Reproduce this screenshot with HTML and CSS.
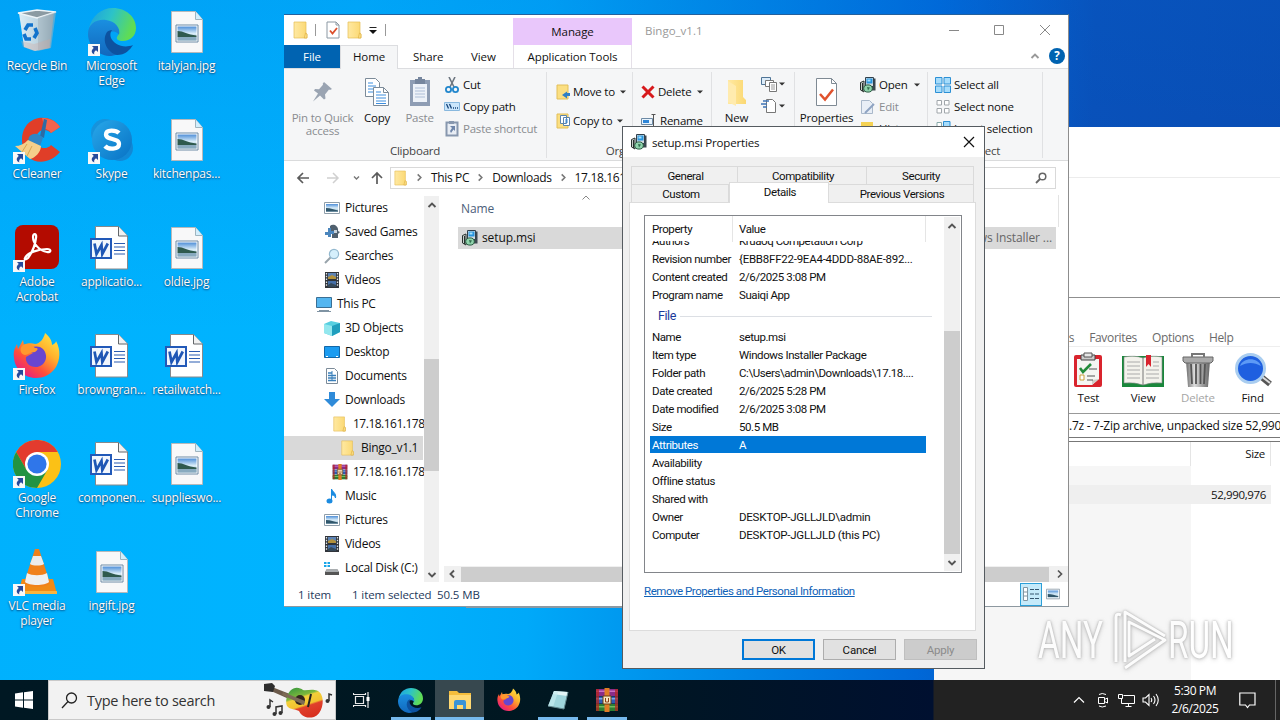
FILE: index.html
```html
<!DOCTYPE html>
<html lang="en">
<head>
<meta charset="utf-8">
<title>Desktop</title>
<link rel="stylesheet" href="styles.css">
</head>
<body>
<svg class="defs" width="0" height="0">
<defs>
<linearGradient id="gFold" x1="0" x2="1"><stop offset="0" stop-color="#ffe9a2"/><stop offset="1" stop-color="#fbd872"/></linearGradient>
<linearGradient id="gEdgeA" x1="0" x2="1" y1="0" y2=".3"><stop offset="0" stop-color="#1b9de2"/><stop offset=".5" stop-color="#2cc3c8"/><stop offset="1" stop-color="#5fdc55"/></linearGradient>
<linearGradient id="gEdgeB" x1="0" x2="0" y1="0" y2="1"><stop offset="0" stop-color="#1a8fe0"/><stop offset="1" stop-color="#1268bd"/></linearGradient>
<linearGradient id="gSky" x1="0" x2="0" y1="0" y2="1"><stop offset="0" stop-color="#4f8fd8"/><stop offset=".5" stop-color="#d8ecf8"/><stop offset="1" stop-color="#9dbdd0"/></linearGradient>
<linearGradient id="gSkype" x1="0" x2="1" y1="0" y2="1"><stop offset="0" stop-color="#28a8ea"/><stop offset="1" stop-color="#0872c4"/></linearGradient>
<linearGradient id="gFox" x1="1" x2=".2" y1="0" y2="1"><stop offset="0" stop-color="#fff24a"/><stop offset=".4" stop-color="#ffb02c"/><stop offset=".7" stop-color="#ff4f3a"/><stop offset="1" stop-color="#e3178c"/></linearGradient>
<linearGradient id="gBin" x1="0" x2="1"><stop offset="0" stop-color="#eef3f6"/><stop offset=".6" stop-color="#c9d5dc"/><stop offset="1" stop-color="#8d9ba5"/></linearGradient>
<linearGradient id="gGuitar" x1="0.2" x2=".6" y1="0" y2="1"><stop offset="0" stop-color="#3e9b3f"/><stop offset=".3" stop-color="#7db83c"/><stop offset=".36" stop-color="#f3cf3a"/><stop offset=".6" stop-color="#f3c22f"/><stop offset=".66" stop-color="#e0402c"/><stop offset="1" stop-color="#d8301f"/></linearGradient>
<linearGradient id="gCan" x1="0" x2="1"><stop offset="0" stop-color="#6d6d6d"/><stop offset=".35" stop-color="#dcdcdc"/><stop offset="1" stop-color="#666"/></linearGradient>

<symbol id="folder" viewBox="0 0 16 18"><path d="M1 1h12v12h1v4H1z" fill="url(#gFold)" stroke="#e5bd55" stroke-width=".7"/><path d="M12.500 12c1.500 0 1.800 1.500 1.300 5h-2.500z" fill="#fbe08a" stroke="#dfb041" stroke-width=".7"/></symbol>
<symbol id="shortcut" viewBox="0 0 12 12"><path d="M0 0h12v12H0z" fill="#f8f8f8"/><path d="M4 2h6v6L8 6.200C6 7.500 6 9 6.300 10.500 3 9 3 6 5.800 4z" fill="#274a9b"/></symbol>
<symbol id="image" viewBox="0 0 32 42"><path d="M.5.5h24l7 8v33H.5z" fill="#f8f8f9" stroke="#b7b9bb"/><path d="M24.500.5v8h7" fill="#d3eefc" stroke="#9fb4bf"/><path d="M5 14h22v17H5z" fill="#fff" stroke="#6d8aa5"/><path d="M6.500 15.500h19v14h-19z" fill="url(#gSky)"/><path d="M6.500 20c6 0 10 3.500 19 4.500V26h-19z" fill="#2f5a4e"/><path d="M6.500 26h19v3.500h-19z" fill="#88aabf"/></symbol>
<symbol id="word" viewBox="0 0 38 44"><path d="M5.500.5h23l9 9.500v33h-32z" fill="#fff" stroke="#86898c"/><path d="M28.500.5V10h9" fill="#f1f1f1" stroke="#63676a"/><path d="M24 17.500h11M24 21h11M24 24.500h11M24 28h11" stroke="#2b5cb2" stroke-width="1.200"/><path d="M0 12h22v21H0z" fill="#2259b8"/><path d="M2 14h18v17H2z" fill="#f2f6fd"/><path d="M4.500 17.500l2 10.500 5-9 .8 9 5.500-10.500" fill="none" stroke="#1f56b5" stroke-width="2.700"/></symbol>
<symbol id="edge" viewBox="0 0 48 48"><path d="M1 20C4 8 13 0 25 0c13 0 23 9 23 20 0 8-6 13-13 13-5 0-7-2-6-4 4-5 1-13-8-15C13 12 6 14 1 20z" fill="url(#gEdgeA)"/><path d="M0 26C0 16 8 11 18 12c9 1 15 8 13 15-2-4-8-5-11-1-5 7 4 18 17 15-4 5-10 7-16 7C9 47 0 37 0 26z" fill="url(#gEdgeB)"/><path d="M19 24c-6 9 1 21 10 23 8 0 13-5 16-10-10 4-19-1-22-7-1-3-1-5 1-8-2 0-4 1-5 2z" fill="#0d52a0"/></symbol>
<symbol id="firefox" viewBox="0 0 48 48"><path d="M32 1c5 4 7 8 7 12 3-1 4-3 4-4 5 9 4 19 0 26-5 8-13 11-20 11C11 46 2 37 1 26c-1-7 1-10 3-14l1 5 5-9 1 5c3-2 8-2 11-1 5 0 9-6 10-11z" fill="url(#gFox)"/><path d="M14 19c4-5 12-6 16-2 7 8 1 18-7 18-7 0-11-5-10-10l7-4z" fill="#6846cf"/><path d="M10 13c5-3 9 0 12 3 4 0 3 2 0 4-5 0-7 3-10 3-5-1-6-7-2-10z" fill="#ff982e"/></symbol>
<symbol id="rar" viewBox="0 0 24 24"><path d="M1 1h22v7H1z" fill="#8a2c88"/><path d="M1 2.500h22v1.500H1z" fill="#c86fc4"/><path d="M1 8.500h22v7H1z" fill="#2d5eb5"/><path d="M1 10h22v1.500H1z" fill="#7fa6e4"/><path d="M1 16h22v7H1z" fill="#2d7d32"/><path d="M1 18h22v1.500H1z" fill="#73ba62"/><path d="M1 1h3v22H1zM20 1h3v22h-3z" fill="#b3261e" opacity=".75"/><path d="M9.500 0h5v24h-5z" fill="#e07c25"/><path d="M8 8h8v8H8z" fill="#f4e6c0" stroke="#6b3c12"/><path d="M10.500 10v4M13.500 10v4M10.500 14h3" stroke="#8c3c14" fill="none"/></symbol>
<symbol id="msi" viewBox="0 0 16 16"><path d="M11 1.500h4.500v12H12z" fill="#3c474f"/><path d="M5.500.5h8v9h-8z" fill="#d5dde2" stroke="#31414d"/><path d="M6.500 1.500h6v5h-6z" fill="#2795de"/><path d="M7.500 2.500h3v2h-3z" fill="#a7e0fb"/><path d="M.5 5.500L4 4v11L.5 13z" fill="#c9cfcc" stroke="#28312e"/><path d="M2.500 6v8" stroke="#28312e"/><ellipse cx="8" cy="11.500" rx="4.300" ry="3.600" fill="#8fd3ab" stroke="#275a40"/><path d="M7 10l3 .5-2 3z" fill="#2f6b4c"/></symbol>
<symbol id="pic" viewBox="0 0 16 16"><path d="M.5 2.500h15v11H.5z" fill="#fff" stroke="#8f9eaa"/><path d="M2 4h12v8H2z" fill="url(#gSky)"/><path d="M2 8c5 0 8 1.500 12 2.500v1H2z" fill="#30566b"/></symbol>
<symbol id="film" viewBox="0 0 16 16"><path d="M1 0h14v16H1z" fill="#30343a"/><path d="M2.500 1v14M13.500 1v14" stroke="#dfe5ea" stroke-width="1.300" stroke-dasharray="1.500 1.300"/><path d="M4 1h8v6H4z" fill="#5d83b5"/><path d="M4 5l4-2 4 2v2H4z" fill="#b3923c"/><path d="M4 9h8v6H4z" fill="#4670a8"/><path d="M4 13l3-2 5 2v2H4z" fill="#35495a"/></symbol>
<symbol id="page" viewBox="0 0 16 18"><path d="M2 1h9l3 3v13H2z" fill="#fff" stroke="#8b98a3"/><path d="M11 1v3h3" fill="none" stroke="#8b98a3"/><path d="M5 9.500l2.500 3L12 7" fill="none" stroke="#dc4f2c" stroke-width="1.800"/></symbol>
<symbol id="chevup" viewBox="0 0 10 10"><path d="M1.500 7L5 3.500 8.500 7" fill="none" stroke="currentColor" stroke-width="1.900"/></symbol>
<symbol id="chevdn" viewBox="0 0 10 10"><path d="M1.500 3L5 6.500 8.500 3" fill="none" stroke="currentColor" stroke-width="1.900"/></symbol>
<symbol id="chevrt" viewBox="0 0 10 10"><path d="M3 1.500L6.500 5 3 8.500" fill="none" stroke="currentColor" stroke-width="1.700"/></symbol>
<symbol id="tri" viewBox="0 0 6 4"><path d="M0 .5h6L3 3.500z" fill="#333"/></symbol>
</defs>
</svg>

<div class="desktop">
<div class="icons">
  <div class="dicon"><div class="art"><svg width="48" height="48" viewBox="0 0 48 48"><path d="M6 5l35-1-4 36-15 3-11-4z" fill="url(#gBin)" opacity=".92"/><path d="M5 5l19-3 19 2-19 6z" fill="#8b9aa2" stroke="#edf4f8" stroke-width="1.400"/><path d="M25 10l18-6-5 36-13 3z" fill="#a3b2bc" opacity=".55"/><path d="M8 33l13 3 16-5-1 9-15 3-11-4z" fill="#cfa9a0" opacity=".35"/><g fill="none" stroke="#1273cc" stroke-width="3.600"><path d="M12 22l3-5 5 0"/><path d="M22 20l2 5-3 5"/><path d="M18 31h-5l-2-5"/></g></svg></div><span>Recycle Bin</span></div>
  <div class="dicon"><div class="art"><svg width="48" height="48" viewBox="0 0 48 48"><path d="M47 11C37-4 10-1 9 23s24 30 38 13l-9-7c-5 6-15 3-15-6s10-12 15-6z" fill="#e03e28"/><path d="M47 11c-5-7-11-9-18-9l3 11c2 0 4 1 6 4z" fill="#f2644d"/><path d="M27 20L31 3l3 1-3 18z" fill="#2c6ca4"/><path d="M16 21c4-5 10-4 14 1l-3 8-12-5z" fill="#2f86c4"/><path d="M15 24l13 6c0 6-6 12-11 13L2 30c5 0 9-2 13-6z" fill="#f4cf8a"/><path d="M14 28l-5 8M19 30l-5 10" stroke="#d9a550"/></svg><svg class="arrow"><use href="#shortcut"/></svg></div><span>CCleaner</span></div>
  <div class="dicon"><div class="art"><svg width="48" height="48" viewBox="0 0 48 48"><rect x="2" y="1" width="44" height="44" rx="8" fill="#b30b00"/><path d="M12 34c2-5 13-9 22-9 5 0 4 4 0 3-8-1-14-9-14-15 0-4 4-4 3 1-1 8-5 16-8 20-2 2-4 2-3 0z" fill="none" stroke="#fff" stroke-width="2.200"/></svg><svg class="arrow"><use href="#shortcut"/></svg></div><span>Adobe<br>Acrobat</span></div>
  <div class="dicon"><div class="art"><svg width="48" height="48"><use href="#firefox"/></svg><svg class="arrow"><use href="#shortcut"/></svg></div><span>Firefox</span></div>
  <div class="dicon"><div class="art"><svg width="48" height="48" viewBox="0 0 48 48"><circle cx="24" cy="24" r="24" fill="#fbc116"/><path d="M3.200 12A24 24 0 0 1 44.800 12H24L13.600 30z" fill="#e33b2e"/><path d="M3.200 12A24 24 0 0 0 24 48l10.400-18H13.600z" fill="#229342"/><circle cx="24" cy="24" r="12" fill="#fff"/><circle cx="24" cy="24" r="9.600" fill="#2f76ea"/></svg><svg class="arrow"><use href="#shortcut"/></svg></div><span>Google<br>Chrome</span></div>
  <div class="dicon"><div class="art"><svg width="48" height="48" viewBox="0 0 48 48"><path d="M9 31h31l4 15H5z" fill="#f08a17"/><path d="M5 43h39v3H5z" fill="#f9b43e"/><path d="M22 1h4l11 34c-3 5-23 5-26 0z" fill="#f0811b"/><path d="M20 8h8l3 8c-3 2-11 2-14 0z" fill="#ececec"/><path d="M14 25c5 3 15 3 20 0l2 9c-4 4-20 4-24 0z" fill="#f0f0f0"/></svg><svg class="arrow"><use href="#shortcut"/></svg></div><span>VLC media<br>player</span></div>
  <div class="dicon"><div class="art"><svg width="48" height="48"><use href="#edge"/></svg><svg class="arrow"><use href="#shortcut"/></svg></div><span>Microsoft<br>Edge</span></div>
  <div class="dicon"><div class="art"><svg width="48" height="48" viewBox="0 0 48 48"><circle cx="17" cy="17" r="14" fill="#1693dc"/><circle cx="32" cy="32" r="13" fill="#1288d5"/><circle cx="24" cy="24" r="20" fill="url(#gSkype)"/><path d="M31 17c-3-3-13-4-13 1.500 0 6 13 3 13 9.500 0 6-11 5.500-14 2" fill="none" stroke="#fff" stroke-width="4.300"/></svg><svg class="arrow"><use href="#shortcut"/></svg></div><span>Skype</span></div>
  <div class="dicon"><div class="art"><svg class="wordi"><use href="#word"/></svg></div><span>applicatio...</span></div>
  <div class="dicon"><div class="art"><svg class="wordi"><use href="#word"/></svg></div><span>browngran...</span></div>
  <div class="dicon"><div class="art"><svg class="wordi"><use href="#word"/></svg></div><span>componen...</span></div>
  <div class="dicon"><div class="art"><svg class="imgi"><use href="#image"/></svg></div><span>ingift.jpg</span></div>
  <div class="dicon"><div class="art"><svg class="imgi"><use href="#image"/></svg></div><span>italyjan.jpg</span></div>
  <div class="dicon"><div class="art"><svg class="imgi"><use href="#image"/></svg></div><span>kitchenpas...</span></div>
  <div class="dicon"><div class="art"><svg class="imgi"><use href="#image"/></svg></div><span>oldie.jpg</span></div>
  <div class="dicon"><div class="art"><svg class="wordi"><use href="#word"/></svg></div><span>retailwatch...</span></div>
  <div class="dicon"><div class="art"><svg class="imgi"><use href="#image"/></svg></div><span>supplieswo...</span></div>
</div>

<div class="backwin"><div class="backhead"></div></div>

<div class="winrar">
  <div class="rar-menu"><span>Tools</span><span>Favorites</span><span>Options</span><span>Help</span></div>
  <div class="rar-tools">
    <div class="rt rt1"><svg width="32" height="36" viewBox="0 0 32 36"><rect x="2" y="3" width="28" height="32" rx="2" fill="#d9242d"/><path d="M5 7h22v20l-7 6H5z" fill="#f5f5f2"/><path d="M27 27l-7 6v-5z" fill="#cfcfc8"/><path d="M9 3h14v5H9z" fill="#ccc" stroke="#444"/><path d="M12 1h8v4h-8z" fill="#e6e6e6" stroke="#555"/><path d="M8 16l3 4 8-8" fill="none" stroke="#238b3a" stroke-width="2.600"/><path d="M17 17h8M15 24h8M15 28h6" stroke="#555"/><path d="M8 23h4v5H8z" fill="#fff" stroke="#c99f3a"/></svg>Test</div>
    <div class="rt rt2"><svg width="44" height="36" viewBox="0 0 44 36"><path d="M1 4h42v31H1z" fill="#19873b"/><path d="M3 5q11-2 19 1 8-3 19-1v26q-11-1-19 2-8-3-19-2z" fill="#f3f2ec" stroke="#888" stroke-width=".6"/><path d="M22 6v27" stroke="#777"/><path d="M6 10h13M6 14h13M6 18h13M6 22h13M6 26h13M25 18h13M25 22h13M25 26h13M32 10h6M32 14h6" stroke="#aaa"/><path d="M25 3h5v12l-2.500-3-2.500 3z" fill="#d8242f"/></svg>View</div>
    <div class="rt rt3 off"><svg width="32" height="36" viewBox="0 0 32 36"><path d="M4 9h24l-2 26H6z" fill="url(#gCan)"/><path d="M9 12l1 20M14 12v20M18.500 12v20M23 12l-1 20" stroke="#555" stroke-width="1.800"/><path d="M1 5h30v4l-2 2H3L1 9z" fill="#aaa" stroke="#666"/><path d="M10 5V2h12v3" fill="none" stroke="#777" stroke-width="2"/></svg>Delete</div>
    <div class="rt rt4"><svg width="38" height="36" viewBox="0 0 38 36"><path d="M25 23l11 9" stroke="#555" stroke-width="6"/><path d="M27 24l9 7" stroke="#ddd" stroke-width="2"/><circle cx="16.500" cy="16.500" r="14" fill="#1e5fe0" stroke="#a9cdf0" stroke-width="3"/><path d="M6 14c3-9 18-9 21 0-7-4-14-4-21 0z" fill="#77b3ff" opacity=".7"/></svg>Find</div>
  </div>
  <div class="rar-path">.7z - 7-Zip archive, unpacked size 52,990,976 bytes</div>
  <div class="rar-head"><span class="c1"></span><span class="c2">Size</span></div>
  <div class="rar-list"><div class="rar-row">52,990,976</div></div>
</div>

<section class="explorer">
  <div class="ex-top">
    <div class="ex-title">
      <svg class="fo q1"><use href="#folder"/></svg><i class="tick t1"></i><svg class="fo q2"><use href="#page"/></svg><svg class="fo q3"><use href="#folder"/></svg>
      <svg class="q4" width="8" height="7" viewBox="0 0 8 7"><path d="M.5.5h7" stroke="#222"/><path d="M0 3h8L4 7z" fill="#111"/></svg><i class="tick t2"></i>
      <div class="manage">Manage</div><div class="wtitle">Bingo_v1.1</div>
      <svg class="wctl" width="104" height="12" viewBox="0 0 104 12"><path d="M1 6.500h10M46.500 1.500h9v9h-9zM92 1l10 10M102 1L92 11" fill="none" stroke="#888"/></svg>
    </div>
    <div class="ex-tabs"><div class="tfile">File</div><div class="thome">Home</div><div class="tshare">Share</div><div class="tview">View</div><div class="tapp">Application Tools</div>
      <svg class="rcol" width="10" height="10"><use href="#chevup"/></svg><div class="help">?</div></div>
  </div>
  <div class="ribbon">
    <div class="grp g1">
      <div class="big bpin dis"><svg width="24" height="32" viewBox="0 0 24 32"><path d="M13 5l8 7-2 1-1-.5-4 5 .5 4-1.500 1-4-4-7 6 5-8-4-3 1-1.500 4 .2 4-4.500-.3-1z" fill="#9aa4b2"/></svg><span>Pin to Quick<br>access</span></div>
      <div class="big bcopy"><svg width="26" height="32" viewBox="0 0 26 32"><path d="M1.500 1.500h10l4 4v14h-14z" fill="#fff" stroke="#7c8b99"/><path d="M4 6h5M4 9h8M4 12h8M4 15h8" stroke="#3d8ede"/><path d="M9.500 10.500h10l5 5v13h-15z" fill="#fff" stroke="#7c8b99"/><path d="M19.500 10.500v5h5" fill="none" stroke="#7c8b99"/><path d="M12 15h5M12 18h10M12 21h10M12 24h10M12 26.500h10" stroke="#3d8ede"/></svg><span>Copy</span></div>
      <div class="big bpaste dis"><svg width="22" height="32" viewBox="0 0 22 32"><path d="M1 3h20v26H1z" fill="#8e9db4"/><path d="M4 7h14v18H4z" fill="#edf2f9"/><path d="M6 2h10v5H6z" fill="#76869e"/><path d="M9 0h4v3H9z" fill="#76869e"/><path d="M6 11h10M6 14h10M6 17h10M6 20h10" stroke="#aebfd8"/></svg><span>Paste</span></div>
      <div class="small"><div><svg width="16" height="16" viewBox="0 0 16 16"><path d="M5 0l5 10M11 0L6 10" stroke="#6d7680" stroke-width="1.600"/><circle cx="4.500" cy="12.500" r="2.600" fill="none" stroke="#2287cd" stroke-width="1.800"/><circle cx="11.500" cy="12.500" r="2.600" fill="none" stroke="#2287cd" stroke-width="1.800"/></svg>Cut</div><div><svg width="16" height="16" viewBox="0 0 16 16"><path d="M.5 3.500h15v8H.5z" fill="#cbe6fb" stroke="#88b8de"/><path d="M2.500 5l2 4.500M5.500 5l2 4.500M9 9h1M11 9h1M13 9h1" stroke="#16457b" stroke-width="1.300"/></svg>Copy path</div><div class="dis"><svg width="16" height="16" viewBox="0 0 16 16"><path d="M2.500 1.500h11v13h-11z" fill="#e8edf4" stroke="#8797ae" stroke-width="2"/><path d="M5 0h5v3H5z" fill="#8797ae"/><path d="M6 5h5v5L9.500 8.500 7 12l-1-2 2-3z" fill="#6e85a9"/></svg>Paste shortcut</div></div>
      <div class="cap">Clipboard</div>
    </div>
    <div class="grp g2"><div class="small2"><div><svg width="15" height="16" viewBox="0 0 15 16"><path d="M1 1h11v14H1z" fill="#fbdf82" stroke="#e2bf59"/><path d="M14 9v3h-3v2.500L6 11l5-3.500V9z" fill="#2e7fc7"/></svg>Move to <svg class="tri"><use href="#tri"/></svg></div><div><svg width="15" height="16" viewBox="0 0 15 16"><path d="M1 1h11v14H1z" fill="#fbdf82" stroke="#e2bf59"/><path d="M4.500 2.500h6v8h-6zM7.500 4.500h6v8h-6z" fill="#fff" stroke="#5b84ad"/><path d="M9 7h3M9 9h3" stroke="#3d8ede"/></svg>Copy to <svg class="tri"><use href="#tri"/></svg></div></div></div>
    <div class="grp g3"><div class="small2"><div><svg width="14" height="14" viewBox="0 0 14 14"><path d="M1.500 1.500l11 11M12.500 1.500l-11 11" stroke="#d7191c" stroke-width="3"/></svg>Delete <svg class="tri"><use href="#tri"/></svg></div><div><svg width="16" height="14" viewBox="0 0 16 14"><path d="M.5 4.500h11v6H.5z" fill="#e9f4fd" stroke="#6d8aa5"/><path d="M2 6h6v3H2z" fill="#2f86d8"/><path d="M10.500.5h4M12.500.5v13M10.500 13.500h4" stroke="#555" fill="none"/></svg>Rename</div></div><div class="cap org">Organize</div></div>
    <div class="grp g4"><div class="big bnew"><svg width="20" height="32" viewBox="0 0 20 32"><path d="M1 3h15v17l3 3v4H1z" fill="url(#gFold)"/><path d="M1 4l8 5v20l-8-4z" fill="#ffebae"/></svg><span>New</span></div><div class="ngrp"><div><svg width="17" height="16" viewBox="0 0 17 16"><path d="M.5 1.500h9v7h-9z" fill="#dcecf9" stroke="#4f7496"/><path d="M4.500 4.500h8v6h-8z" fill="#fff" stroke="#777"/><path d="M8.500 6.500h7v9h-7z" fill="#fff" stroke="#777"/><path d="M10 9h4M10 11h4M10 13h4" stroke="#999"/></svg><svg class="tri"><use href="#tri"/></svg></div><div><svg width="17" height="16" viewBox="0 0 17 16"><path d="M5.500 1.500h6l3 3v10h-9z" fill="#fff" stroke="#777"/><path d="M2 3h6M0 6h6M2 9h4" stroke="#3f74b5" stroke-width="1.400"/></svg><svg class="tri"><use href="#tri"/></svg></div></div></div>
    <div class="grp g5"><div class="big bprop"><svg width="23" height="32" viewBox="0 0 23 32"><path d="M1.500 1.500h15l5 5v22h-20z" fill="#fff" stroke="#7f8a94"/><path d="M16.500 1.500v5h5" fill="none" stroke="#7f8a94"/><path d="M5 17l5 5.500 8-10" fill="none" stroke="#e0522d" stroke-width="2.500"/></svg><span>Properties</span></div><div class="small s5"><div><svg width="16" height="16"><use href="#msi"/></svg>Open <svg class="tri"><use href="#tri"/></svg></div><div class="dis"><svg width="16" height="16" viewBox="0 0 16 16"><path d="M1.500 1.500h8l3 3v10h-11z" fill="#e8eef6" stroke="#a9b8ca"/><path d="M14 5l-9 9" stroke="#8ea3c2" stroke-width="2"/></svg>Edit</div><div><svg width="16" height="16" viewBox="0 0 16 16"><path d="M1 1h12v13H1z" fill="#f5d253"/><circle cx="10" cy="10" r="5" fill="#3a9a55"/></svg>History</div></div></div>
    <div class="grp g6"><div class="small s6"><div><svg width="16" height="16" viewBox="0 0 16 16"><path d="M.5.5h6.500v6.500H.5zM9 .5h6.500v6.500H9zM.5 9h6.500v6.500H.5zM9 9h6.500v6.500H9z" fill="#a6dcfb" stroke="#2c90d5"/></svg>Select all</div><div><svg width="16" height="16" viewBox="0 0 16 16"><path d="M2 1.500h4.500v4.500H2zM9.500 1.500H14v4.500H9.500zM2 9.500h4.500V14H2zM9.500 9.500H14V14H9.500z" fill="#fff" stroke="#a0a6aa"/></svg>Select none</div><div><svg width="16" height="16" viewBox="0 0 16 16"><path d="M2 1.500h4.500v4.500H2z" fill="#fff" stroke="#8aa"/><path d="M8.500.5h6.500v6.500H8.500z" fill="#a6dcfb" stroke="#2c90d5"/></svg>Invert selection</div></div><div class="cap">Select</div></div>
  </div>
  <div class="addr">
    <svg class="nav" width="84" height="16" viewBox="0 0 84 16"><path d="M12 8H1M6 3L1 8l5 5" fill="none" stroke="#5b5b5b" stroke-width="1.700"/><path d="M30 8h11M36 3l5 5-5 5" fill="none" stroke="#d0d0d0" stroke-width="1.500"/><path d="M57 6.500l2.500 2.500L62 6.500" fill="none" stroke="#777" stroke-width="1.400"/><path d="M80 14V3M75 8l5-5 5 5" fill="none" stroke="#5b5b5b" stroke-width="1.700"/></svg>
    <div class="crumbs"><svg width="14" height="18"><use href="#folder"/></svg><svg class="cr"><use href="#chevrt"/></svg><span>This PC</span><svg class="cr"><use href="#chevrt"/></svg><span>Downloads</span><svg class="cr"><use href="#chevrt"/></svg><span>17.18.161.178</span></div>
    <div class="sbox"><svg width="12" height="12" viewBox="0 0 12 12"><circle cx="7.500" cy="4.500" r="3.300" fill="none" stroke="#666" stroke-width="1.500"/><path d="M5 7l-4 4" stroke="#666" stroke-width="1.800"/></svg></div>
  </div>
  <div class="ex-main">
    <div class="tree">
      <div class="n"><svg><use href="#pic"/></svg>Pictures</div>
      <div class="n"><svg viewBox="0 0 16 16"><path d="M6 2c3-3 9 0 8 5l2 1-2 2v4H8V9H6z" fill="#50606e"/><path d="M1 8h3V4h3v3h3v3H7v3H4v-2H1z" fill="#4b86bd"/><path d="M10 6h3v3h-3z" fill="#c8d3dc"/></svg>Saved Games</div>
      <div class="n"><svg viewBox="0 0 16 16"><path d="M7 9l-6 6" stroke="#98a3ab" stroke-width="2"/><circle cx="10" cy="6" r="4.600" fill="#d5effc" stroke="#92b8cf" stroke-width="1.200"/></svg>Searches</div>
      <div class="n"><svg><use href="#film"/></svg>Videos</div>
      <div class="n pc"><svg viewBox="0 0 16 16"><path d="M.5 1.500h15v10H.5z" fill="#54b6f0" stroke="#3a6f94"/><path d="M3 14.500h10M1 15.500h14" stroke="#7f93a3"/></svg>This PC</div>
      <div class="n"><svg viewBox="0 0 16 16"><path d="M0 4l7-3 9 2v9l-8 4-8-3z" fill="#56cfe0"/><path d="M0 4l8 2v10l-8-3z" fill="#93e7ee"/><path d="M8 6l8-3v9l-8 4z" fill="#1e9ebd"/></svg>3D Objects</div>
      <div class="n"><svg viewBox="0 0 16 16"><path d="M.5 2.500h15v11H.5z" fill="#1b9cf1" stroke="#1267a8"/><path d="M2 12.500h2M12 12.500h2" stroke="#fff"/></svg>Desktop</div>
      <div class="n"><svg viewBox="0 0 16 16"><path d="M2.500.5h8l3 3v12h-11z" fill="#fff" stroke="#7c8b99"/><path d="M4 5h4M4 7.500h8M4 10h8M4 12.500h8" stroke="#3b80bb" stroke-width="1.300"/><path d="M8 3v10" stroke="#3b80bb"/></svg>Documents</div>
      <div class="n"><svg viewBox="0 0 16 16"><path d="M5 0h6v7h5l-8 8-8-8h5z" fill="#2f8bd9"/></svg>Downloads</div>
      <div class="n l2"><svg><use href="#folder"/></svg>17.18.161.178</div>
      <div class="n l3 sel"><svg><use href="#folder"/></svg>Bingo_v1.1</div>
      <div class="n l2"><svg><use href="#rar"/></svg>17.18.161.178</div>
      <div class="n"><svg viewBox="0 0 16 16"><path d="M7.500 13V1c1 3 5 4 4 9-.5-2-1.500-3-3.500-3" fill="#1b8be0" stroke="#1b8be0"/><ellipse cx="5.500" cy="13" rx="3" ry="2.500" fill="#1b8be0"/></svg>Music</div>
      <div class="n"><svg><use href="#pic"/></svg>Pictures</div>
      <div class="n"><svg><use href="#film"/></svg>Videos</div>
      <div class="n"><svg viewBox="0 0 16 16"><path d="M0 2h2.500v2H0zM3.500 2H6v2H3.500zM0 5h2.500v2H0zM3.500 5H6v2H3.500z" fill="#18a5e8"/><path d="M3 9h10l2 3v3H1v-3z" fill="#555"/><path d="M3 9h10l2 3H1z" fill="#a9adb0"/></svg>Local Disk (C:)</div>
    </div>
    <div class="vs"><svg width="10" height="10"><use href="#chevup"/></svg><div class="thumb"></div><svg width="10" height="10"><use href="#chevdn"/></svg></div>
    <div class="files">
      <div class="fhead"><span>Name</span><svg width="10" height="10" viewBox="0 0 10 10"><path d="M1.500 6.500L5 3l3.500 3.500" fill="none" stroke="#888"/></svg></div>
      <div class="frow"><svg width="16" height="16"><use href="#msi"/></svg><span>setup.msi</span><span class="ftype">Windows Installer ...</span></div>
      <div class="fspace"></div>
      <div class="hs"><svg width="10" height="10" viewBox="0 0 10 10"><path d="M7 1.500L3.500 5 7 8.500" fill="none" stroke="#555" stroke-width="1.900"/></svg><div class="hthumb"></div><svg width="10" height="10"><use href="#chevrt"/></svg></div>
    </div>
  </div>
  <div class="status"><span class="s1">1 item</span><span class="s2">1 item selected</span><span class="s3">50.5 MB</span>
    <div class="vdet"><svg width="18" height="14" viewBox="0 0 18 14"><path d="M1.500.5h4v13h-4zM1.500 5h4M1.500 9h4" fill="#fff" stroke="#8196a3"/><path d="M8 2.500h4M13 2.500h4M8 7h4M13 7h4M8 11.500h4M13 11.500h4" stroke="#35566e"/></svg></div><svg class="vpic" width="14" height="14"><use href="#pic"/></svg></div>
</section>

<section class="dialog">
  <div class="dtitle"><svg width="16" height="16"><use href="#msi"/></svg><span>setup.msi Properties</span><svg class="dx" width="12" height="12" viewBox="0 0 12 12"><path d="M1 1l10 10M11 1L1 11" stroke="#111" stroke-width="1.200"/></svg></div>
  <div class="dtabs1"><div>General</div><div>Compatibility</div><div>Security</div></div>
  <div class="dtabs2"><div>Custom</div><div class="on">Details</div><div>Previous Versions</div></div>
  <div class="panel">
    <div class="lbox">
      <div class="lcol">
        <div class="lhead"><span>Property</span><span>Value</span></div>
        <div class="lrows">
          <div class="r first"><span>Authors</span><span>Kruaoq Competation Corp</span></div>
          <div class="r"><span>Revision number</span><span class="w">{EBB8FF22-9EA4-4DDD-88AE-892...</span></div>
          <div class="r"><span>Content created</span><span>2/6/2025 3:08 PM</span></div>
          <div class="r"><span>Program name</span><span>Suaiqi App</span></div>
          <div class="fgroup">File<i></i></div>
          <div class="r"><span>Name</span><span>setup.msi</span></div>
          <div class="r"><span>Item type</span><span>Windows Installer Package</span></div>
          <div class="r"><span>Folder path</span><span>C:\Users\admin\Downloads\17.18....</span></div>
          <div class="r"><span>Date created</span><span>2/6/2025 5:28 PM</span></div>
          <div class="r"><span>Date modified</span><span>2/6/2025 3:08 PM</span></div>
          <div class="r"><span>Size</span><span>50.5 MB</span></div>
          <div class="r hot"><span>Attributes</span><span>A</span></div>
          <div class="r"><span>Availability</span><span></span></div>
          <div class="r"><span>Offline status</span><span></span></div>
          <div class="r"><span>Shared with</span><span></span></div>
          <div class="r"><span>Owner</span><span class="w">DESKTOP-JGLLJLD\admin</span></div>
          <div class="r"><span>Computer</span><span class="w">DESKTOP-JGLLJLD (this PC)</span></div>
        </div>
      </div>
      <div class="lvs"><svg width="10" height="10"><use href="#chevup"/></svg><div></div><svg width="10" height="10"><use href="#chevdn"/></svg></div>
    </div>
    <a class="link">Remove Properties and Personal Information</a>
  </div>
  <div class="btns"><div class="ok">OK</div><div>Cancel</div><div class="na">Apply</div></div>
</section>

<div class="mark"><span class="w1">ANY</span><svg width="60" height="64" viewBox="0 0 60 64"><path d="M8 54V9q0-4 5-2" fill="none" stroke="#fff" stroke-width="3"/><path d="M17 54V4l40 24" fill="none" stroke="#fff" stroke-width="3" stroke-linejoin="round"/><path d="M17 60l40-28L21 14v34l26-17" fill="none" stroke="#fff" stroke-width="3" stroke-linejoin="round"/></svg><span class="w2">RUN</span></div>

<div class="taskbar">
  <div class="start"><svg width="18" height="18" viewBox="0 0 18 18"><path d="M0 2.500L8 1.300V8.500H0zM9 1.200L18 0v8.500H9zM0 9.500h8v7.200L0 15.500zM9 9.500h9V18l-9-1.200z" fill="#fff"/></svg></div>
  <div class="search"><svg class="mag" width="17" height="17" viewBox="0 0 17 17"><circle cx="10.500" cy="6" r="5" fill="none" stroke="#222" stroke-width="1.300"/><path d="M7 9.500l-6 6.500" stroke="#222" stroke-width="1.300"/></svg><span>Type here to search</span>
    <svg class="guitar" width="72" height="38" viewBox="0 0 72 38"><path d="M2 4l7 2 28 11-2 5L8 10 1 9z" fill="#6b5a4b"/><path d="M1 3l8-1 3 3-2 6-9-1z" fill="#2d2d2d"/><path d="M27 10c5-5 10-3 13-1 5 1 13-3 18 4 4 7 1 20-7 23-9 2-13-2-15-6-3-2-9-1-12-5-2-5 0-11 3-15z" fill="url(#gGuitar)"/><circle cx="37" cy="19" r="5" fill="#33251d"/><path d="M20 11l22 9-1 4-22-10z" fill="#7c6a55"/><path d="M48 13l-3 13" stroke="#222" stroke-width="2"/><g fill="none" stroke="#333" stroke-width="1.500"><path d="M7 26v-7l3 2M13 33v-7l6-1v7M66 20v-7l3 1"/></g><circle cx="5.500" cy="26" r="2" fill="#333"/><circle cx="11.500" cy="33" r="2" fill="#333"/><circle cx="17.500" cy="32" r="2" fill="#333"/><circle cx="64.500" cy="20" r="2" fill="#333"/></svg></div>
  <div class="tb"><svg width="17" height="16" viewBox="0 0 17 16"><path d="M2.500 4.500h8v7h-8zM.5 1v1.500h12V1M.5 15v-1.500h12V15M15 0v16" fill="none" stroke="#e8e8e8" stroke-width="1.200"/><path d="M13.500 5h3v4h-3z" fill="#fff"/></svg></div>
  <div class="tb run"><svg width="25" height="25"><use href="#edge"/></svg></div>
  <div class="tb act"><svg width="24" height="20" viewBox="0 0 24 20"><path d="M1 1h8l2 2h12v16H1z" fill="#f5bd3c"/><path d="M1 5h22v14H1z" fill="#ffd872"/><path d="M6 19v-7q0-2 2-2h8q2 0 2 2v7h-3v-4H9v4z" fill="#3a93d8"/></svg></div>
  <div class="tb"><svg width="24" height="24"><use href="#firefox"/></svg></div>
  <div class="tb run"><svg width="24" height="24" viewBox="0 0 24 24"><path d="M8 3l14 1-4 17-16-3z" fill="#9fd5dc"/><path d="M8 3l14 1-1 4L7 6z" fill="#e2f4f6"/><path d="M8 3L2 18l5 1 5-15z" fill="#c6ebef" opacity=".7"/><path d="M2 18l16 3 4-17" fill="none" stroke="#61868d"/></svg></div>
  <div class="tb run"><svg width="26" height="24"><use href="#rar"/></svg></div>
  <div class="tray">
    <svg class="y1" width="12" height="10" viewBox="0 0 12 10"><path d="M1 7.500l5-5 5 5" fill="none" stroke="#fff" stroke-width="1.200"/></svg>
    <svg class="y2" width="14" height="16" viewBox="0 0 14 16"><path d="M2.500 5.500h6v6h-6zM8.500 7.500l3-1.500v5l-3-1.500M3 2.500q3-2 7 0M3 14q3 2 7 0" fill="none" stroke="#fff"/></svg>
    <svg class="y3" width="17" height="15" viewBox="0 0 17 15"><path d="M5.500 2.500h11v8H3.500V6M7.500 13.500h6M10.500 10.500v3" fill="none" stroke="#fff"/><path d="M.5 1.500h4v4h-4z" fill="#222" stroke="#fff"/></svg>
    <svg class="y4" width="18" height="14" viewBox="0 0 18 14"><path d="M1 5h2.500L7 1.500v11L3.500 9H1zM9 5q1.500 2 0 4M11.500 3q3 4 0 8M14 1q4.500 6 0 12" fill="none" stroke="#fff" stroke-width="1.100"/></svg>
    <div class="clock">5:30 PM<br>2/6/2025</div>
    <svg class="y5" width="17" height="17" viewBox="0 0 17 17"><path d="M.8 1h15.200v12H10.500L8.500 15.500l-2-2.500H.8z" fill="none" stroke="#fff" stroke-width="1.200"/></svg>
    <i></i>
  </div>
</div>
</div>
</body>
</html>
```
FILE: styles.css
```css
*{box-sizing:border-box}
body{margin:0;overflow:hidden;font:11.5px/15px "Open Sans","Noto Sans",sans-serif;color:#111;white-space:nowrap}
svg{display:block;flex:none}
.defs{position:absolute}
.desktop{position:relative;width:1280px;height:720px;overflow:hidden;background:linear-gradient(180deg,rgba(0,110,220,.22) 0,rgba(0,110,220,0) 330px),linear-gradient(92deg,#00b1fd 0,#00b4ff 28%,#00a9f9 42%,#0093ec 52%,#0068d8 72%,#0a4cb4 84%,#0a48ae 100%)}
.icons{display:grid;grid-auto-flow:column;grid-template-rows:repeat(6,108px);grid-template-columns:74px 75px 75px;justify-content:start}
.dicon{display:flex;flex-direction:column;align-items:center;padding-top:8px;color:#fff;text-align:center;text-shadow:0 1px 2px #0a4a80,0 0 1px #0a5a90;font-size:12px;letter-spacing:-.22px}
.dicon span{margin-top:2px}
.art{width:48px;height:48px;position:relative;display:flex;align-items:center;justify-content:center}
.arrow{position:absolute;left:0;bottom:0;width:12px;height:12px}
.wordi{width:38px;height:44px;margin-right:5px}
.imgi{width:32px;height:42px}

.backwin{position:absolute;left:466px;top:127px;width:814px;height:481px;background:#fff;border-bottom:1px solid #8a9aa6}
.backhead{height:51px;border-bottom:1px solid #ececec}

.winrar{position:absolute;left:934px;top:297px;width:346px;height:383px;background:#fff;border-top:1px solid #8f8f8f;display:flex;flex-direction:column;overflow:hidden;font-size:12px}
.rar-menu{height:49px;border-bottom:1px solid #eee;padding:32px 0 0 112px;display:flex;gap:15px;color:#6a6a6a;letter-spacing:-.33px}
.rar-tools{height:67px;border-bottom:1px solid #999;display:flex;padding:5px 0 0 127px;font-size:11.5px}
.rt{display:flex;flex-direction:column;align-items:center;gap:2px;width:55px;letter-spacing:-.15px}
.off{color:#a5a5a5}
.rar-path{height:24px;border-bottom:1px solid #777;padding:4px 0 0 135px;letter-spacing:-.27px}
.rar-head{height:28px;margin-top:3px;border-top:1px solid #777;display:flex;text-align:right;font-size:11.5px;letter-spacing:-.3px}
.c1{width:257px;border-right:1px solid #e5e5e5;height:24px}
.c2{width:80px;border-right:1px solid #e5e5e5;padding:4px 5px 0 0;height:24px}
.rar-list{flex:1;margin-top:-3px;padding-top:19px;background:linear-gradient(90deg,#f6f6f6 257px,#fff 257px)}
.rar-row{height:19px;width:337px;background:#efefef;text-align:right;padding:2px 5px 0 0;letter-spacing:-.35px;font-size:11.5px}

.explorer{position:absolute;left:284px;top:14px;width:785px;height:593px;background:#fff;border-top:1px solid #24609c;border-right:1px solid #8d8d8d;border-bottom:1px solid #8d98a0;display:flex;flex-direction:column}
.ex-title{display:flex;height:30px;align-items:center}
.fo{width:16px;height:18px}
.q1{margin-left:9px}.q2{margin-left:9px}.q3{margin-left:6px}.q4{margin-left:6px}
.tick{width:1px;height:12px;background:#999}
.t1{margin-left:6px}.t2{margin-left:8px}
.manage{width:119px;height:27px;background:#e9c7fb;margin:3px 0 0 127px;text-align:center;line-height:28px;align-self:flex-start;letter-spacing:-.1px}
.wtitle{margin-left:13px;width:59px;color:#999}
.wctl{margin-left:244px}
.ex-tabs{display:flex;height:24px;border-bottom:1px solid #dcdde0;line-height:24px;align-items:stretch;letter-spacing:-.1px}
.tfile{width:56px;background:#0063b1;color:#fff;text-align:center}
.thome{width:58px;height:24px;background:#f5f6f7;border:1px solid #dcdde0;border-bottom:0;text-align:center;line-height:22px}
.tshare{margin-left:15px;width:58px}
.tview{width:42px}
.tapp{width:119px;text-align:center;border:solid #e5e0e8;border-width:0 1px}
.rcol{margin:6px 0 0 398px;color:#999}
.help{width:16px;height:16px;border-radius:8px;background:#0063b1;color:#fff;font-weight:700;line-height:16px;text-align:center;margin:3px 0 0 9px}
.ribbon{height:92px;background:#f5f6f7;border-bottom:1px solid #dadbdc;display:flex;padding-top:3px;letter-spacing:-.22px}
.grp{display:flex;height:86px;border-right:1px solid #e0e1e3;position:relative}
.g1{width:263px}.g2{width:86px}.g3{width:79px}.g4{width:83px}.g5{width:133px}.g6{width:115px}
.big{display:flex;flex-direction:column;align-items:center;text-align:center;padding-top:5px;line-height:13px;gap:2px}
.bpin{width:77px}.bcopy{width:32px}.bpaste{width:53px}
.dis{color:#8a8d91}
.cap{position:absolute;bottom:0;left:0;right:0;text-align:center;color:#444}
.cap.org{left:-86px}
.small{padding-top:2px;margin-left:-2px;line-height:22px}
.small div{display:flex;align-items:center;gap:3px;height:22px}
.small2{padding:5px 0 0 9px}
.small2 div{display:flex;align-items:center;gap:2px;height:29px}
.g3 .small2{padding-left:8px}
.g3 .small2 div{gap:3px}
.tri{width:6px;height:4px;margin-left:3px}
.bnew{width:49px}
.ngrp{padding-top:1px}
.ngrp div{display:flex;align-items:center;height:22px}
.ngrp .tri{margin-left:1px}
.bprop{width:63px}
.s5{margin-left:2px}
.s6{margin-left:7px}
.addr{height:34px;display:flex;align-items:center}
.nav{margin-left:13px;overflow:visible}
.crumbs{margin-left:9px;width:560px;height:22px;border:1px solid #d9d9d9;display:flex;align-items:center;padding-left:3px;font-size:12px;letter-spacing:-.35px}
.cr{width:9px;height:9px;color:#777;margin:0 7px 0 7px}
.sbox{margin-left:10px;width:96px;height:22px;border:1px solid #d9d9d9;display:flex;align-items:center;justify-content:flex-end;padding-right:8px}
.ex-main{display:flex;height:388px}
.tree{width:140px;padding-top:1px;overflow:hidden;font-size:12px;letter-spacing:-.28px}
.n{height:24px;width:139px;display:flex;align-items:center;gap:5px;padding-left:40px}
.n svg{width:16px;height:16px}
.pc{padding-left:32px}.l2{padding-left:48px;letter-spacing:-.5px}.l3{padding-left:56px}
.sel{background:#d9d9d9}
.vs{width:15px;background:#f0f0f0;display:flex;flex-direction:column;align-items:center;padding:4px 0 2px;color:#555;margin-top:1px}
.thumb{width:15px;height:112px;background:#cdcdcd;margin:149px 0 auto}
.files{flex:1;display:flex;flex-direction:column;padding-left:5px;font-size:12px;letter-spacing:-.1px}
.fhead{height:32px;display:flex;padding:6px 0 0 17px;color:#4c607a;width:615px;border-right:1px solid #e3e3e3}
.fhead svg{margin:-8px 0 0 87px}
.frow{height:22px;width:598px;margin-left:14px;background:#d9d9d9;display:flex;align-items:center;padding:0 4px;gap:4px}
.ftype{margin-left:auto;color:#666}
.fspace{flex:1}
.hs{height:16px;background:#f0f0f0;display:flex;align-items:center;padding:0 3px;color:#555}
.hthumb{width:588px;height:15px;background:#cdcdcd;margin:0 auto 0 4px}
.status{height:24px;display:flex;align-items:center;color:#1e395b;letter-spacing:-.1px}
.s1{width:54px;margin-left:14px}.s2{width:85px}.s3{width:583px}
.vdet{width:22px;height:23px;border:1px solid #2b9fd8;background:#c5eafa;display:flex;align-items:center;justify-content:center}
.vpic{margin-left:4px}

.dialog{position:absolute;left:622px;top:126px;width:363px;height:543px;border:1px solid #555b60;background:#f0f0f0;display:flex;flex-direction:column;font:11.5px/14px Roboto,"Liberation Sans",sans-serif;letter-spacing:-.42px}
.dtitle{height:30px;background:#fff;display:flex;align-items:center;gap:5px;padding-left:8px;font:11.5px/15px "Open Sans",sans-serif;letter-spacing:-.18px}
.dtitle span{width:115px}
.dx{margin-left:191px}
.dtabs1,.dtabs2{display:grid;text-align:center;margin-left:8px;width:343px}
.dtabs1{grid-template-columns:107px 129px 107px;margin-top:9px;height:18px}
.dtabs2{grid-template-columns:98px 100px 145px;height:18px}
.dtabs1 div,.dtabs2 div{border:1px solid #dadada;border-width:1px 1px 0 0;line-height:18px;padding-left:2px}
.dtabs1 div:first-child,.dtabs2 div:first-child{border-left-width:1px}
.dtabs2 .on{background:#fff;margin-top:-2px;border:1px solid #dcdcdc;border-bottom:0;height:21px;z-index:1;line-height:18px}
.panel{margin:0 8px 0 6px;width:347px;height:429px;border:1px solid #dcdcdc;background:#fff;padding:12px 0 0 14px}
.lbox{width:318px;height:358px;border:1px solid #82858a;display:flex}
.lcol{width:299px;display:flex;flex-direction:column}
.lhead{display:grid;grid-template-columns:88px 193px;height:25px;line-height:26px}
.lhead span{padding-left:7px;border-right:1px solid #e5e5e5}
.lhead span + span{padding-left:6px}
.lrows{overflow:hidden;height:320px}
.r{display:grid;grid-template-columns:87px 1fr;height:18px;line-height:18px;padding-left:2px;margin-left:5px;width:276px}
.w{letter-spacing:-.24px}
.first{margin-top:-9px}
.hot{background:#0078d7;color:#fff;height:17px;margin-bottom:1px}
.fgroup{display:flex;align-items:center;color:#1a3a9a;padding-left:13px;gap:4px;height:24px;font-size:12.500px}
.fgroup i{width:252px;height:1px;background:#dcdfe4}
.lvs{width:16px;background:#f0f0f0;display:flex;flex-direction:column;align-items:center;padding:4px 0 3px;color:#555;margin:1px}
.lvs div{width:16px;height:223px;background:#cdcdcd;margin:auto 0 4px}
.link{display:inline-block;margin-top:11px;color:#0f62b8;text-decoration:underline;letter-spacing:-.45px}
.btns{display:flex;gap:8px;margin:8px 0 0 119px;letter-spacing:-.2px}
.btns div{width:73px;height:21px;border:1px solid #adadad;background:#e1e1e1;text-align:center;line-height:20px}
.btns .ok{border:2px solid #0078d7;line-height:18px}
.btns .na{background:#ccc;border-color:#bfbfbf;color:#8b8b8b}

.mark{position:absolute;left:1038px;top:608px;width:196px;height:64px;display:flex;color:#fff;font:52px/66px Roboto,sans-serif;filter:drop-shadow(0 0 1px #999) drop-shadow(0 1px 2px #bbb);opacity:.75}
.mark span{display:block;transform-origin:0 0;transform:scaleX(.64)}
.w1{width:70px}.w2{width:66px}

.taskbar{position:absolute;left:0;top:680px;width:1280px;height:40px;display:flex;background:linear-gradient(90deg,#001823 0,#001721 600px,#001030 933px,#222 934px)}
.start{width:48px;display:flex;align-items:center;justify-content:center}
.search{width:288px;background:#f2f2f2;border:1px solid #c9c9c9;display:flex;align-items:center;font:14.500px/20px "Open Sans",sans-serif;color:#333;margin-right:1px}
.search span{margin:1px 0 0 9px;width:177px;letter-spacing:-.28px}
.mag{margin-left:12px}
.tb{width:49px;display:flex;align-items:center;justify-content:center}
.run{background:linear-gradient(#76b9ed,#76b9ed) center bottom/40px 3px no-repeat}
.act{background:#37484f;border-bottom:3px solid #76b9ed;padding-top:2px}
.tray{margin-left:auto;display:flex;align-items:center;color:#fff}
.y2{margin-left:11px}.y3{margin-left:8px}.y4{margin-left:7px}
.clock{width:66px;margin-left:2px;text-align:center;line-height:18px;font-size:12px;letter-spacing:-.4px}
.y5{margin-left:11px}
.tray i{width:1px;height:40px;background:#666;margin:0 4px 0 19px}
```
